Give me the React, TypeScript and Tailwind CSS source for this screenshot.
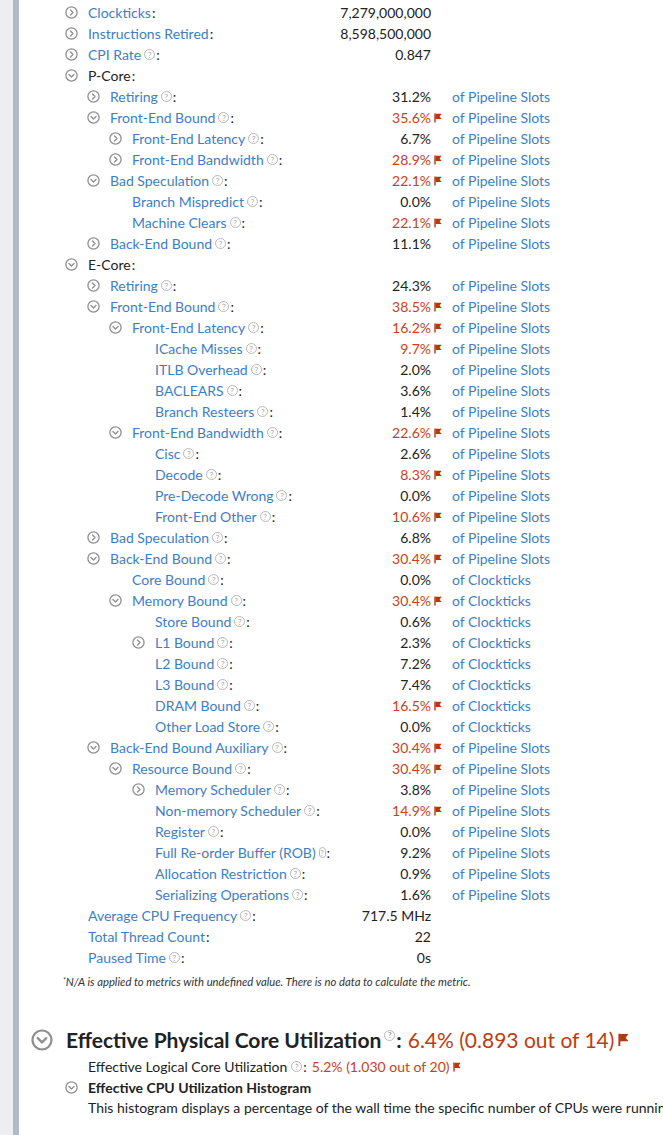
import React from "react";

type Icon = "open" | "closed" | "none";

type Metric = {
  level: number;
  icon: Icon;
  label: string;
  help?: boolean;
  plain?: boolean; // black label, no link
  value?: string;
  flag?: boolean;
  unit?: string;
};

const PS = "of Pipeline Slots";
const CT = "of Clockticks";

const rows: Metric[] = [
  { level: 0, icon: "closed", label: "Clockticks", value: "7,279,000,000" },
  { level: 0, icon: "closed", label: "Instructions Retired", value: "8,598,500,000" },
  { level: 0, icon: "closed", label: "CPI Rate", help: true, value: "0.847" },
  { level: 0, icon: "open", label: "P-Core", plain: true },
  { level: 1, icon: "closed", label: "Retiring", help: true, value: "31.2%", unit: PS },
  { level: 1, icon: "open", label: "Front-End Bound", help: true, value: "35.6%", flag: true, unit: PS },
  { level: 2, icon: "closed", label: "Front-End Latency", help: true, value: "6.7%", unit: PS },
  { level: 2, icon: "closed", label: "Front-End Bandwidth", help: true, value: "28.9%", flag: true, unit: PS },
  { level: 1, icon: "open", label: "Bad Speculation", help: true, value: "22.1%", flag: true, unit: PS },
  { level: 2, icon: "none", label: "Branch Mispredict", help: true, value: "0.0%", unit: PS },
  { level: 2, icon: "none", label: "Machine Clears", help: true, value: "22.1%", flag: true, unit: PS },
  { level: 1, icon: "closed", label: "Back-End Bound", help: true, value: "11.1%", unit: PS },
  { level: 0, icon: "open", label: "E-Core", plain: true },
  { level: 1, icon: "closed", label: "Retiring", help: true, value: "24.3%", unit: PS },
  { level: 1, icon: "open", label: "Front-End Bound", help: true, value: "38.5%", flag: true, unit: PS },
  { level: 2, icon: "open", label: "Front-End Latency", help: true, value: "16.2%", flag: true, unit: PS },
  { level: 3, icon: "none", label: "ICache Misses", help: true, value: "9.7%", flag: true, unit: PS },
  { level: 3, icon: "none", label: "ITLB Overhead", help: true, value: "2.0%", unit: PS },
  { level: 3, icon: "none", label: "BACLEARS", help: true, value: "3.6%", unit: PS },
  { level: 3, icon: "none", label: "Branch Resteers", help: true, value: "1.4%", unit: PS },
  { level: 2, icon: "open", label: "Front-End Bandwidth", help: true, value: "22.6%", flag: true, unit: PS },
  { level: 3, icon: "none", label: "Cisc", help: true, value: "2.6%", unit: PS },
  { level: 3, icon: "none", label: "Decode", help: true, value: "8.3%", flag: true, unit: PS },
  { level: 3, icon: "none", label: "Pre-Decode Wrong", help: true, value: "0.0%", unit: PS },
  { level: 3, icon: "none", label: "Front-End Other", help: true, value: "10.6%", flag: true, unit: PS },
  { level: 1, icon: "closed", label: "Bad Speculation", help: true, value: "6.8%", unit: PS },
  { level: 1, icon: "open", label: "Back-End Bound", help: true, value: "30.4%", flag: true, unit: PS },
  { level: 2, icon: "none", label: "Core Bound", help: true, value: "0.0%", unit: CT },
  { level: 2, icon: "open", label: "Memory Bound", help: true, value: "30.4%", flag: true, unit: CT },
  { level: 3, icon: "none", label: "Store Bound", help: true, value: "0.6%", unit: CT },
  { level: 3, icon: "closed", label: "L1 Bound", help: true, value: "2.3%", unit: CT },
  { level: 3, icon: "none", label: "L2 Bound", help: true, value: "7.2%", unit: CT },
  { level: 3, icon: "none", label: "L3 Bound", help: true, value: "7.4%", unit: CT },
  { level: 3, icon: "none", label: "DRAM Bound", help: true, value: "16.5%", flag: true, unit: CT },
  { level: 3, icon: "none", label: "Other Load Store", help: true, value: "0.0%", unit: CT },
  { level: 1, icon: "open", label: "Back-End Bound Auxiliary", help: true, value: "30.4%", flag: true, unit: PS },
  { level: 2, icon: "open", label: "Resource Bound", help: true, value: "30.4%", flag: true, unit: PS },
  { level: 3, icon: "closed", label: "Memory Scheduler", help: true, value: "3.8%", unit: PS },
  { level: 3, icon: "none", label: "Non-memory Scheduler", help: true, value: "14.9%", flag: true, unit: PS },
  { level: 3, icon: "none", label: "Register", help: true, value: "0.0%", unit: PS },
  { level: 3, icon: "none", label: "Full Re-order Buffer (ROB)", help: true, value: "9.2%", unit: PS },
  { level: 3, icon: "none", label: "Allocation Restriction", help: true, value: "0.9%", unit: PS },
  { level: 3, icon: "none", label: "Serializing Operations", help: true, value: "1.6%", unit: PS },
  { level: 0, icon: "none", label: "Average CPU Frequency", help: true, value: "717.5 MHz" },
  { level: 0, icon: "none", label: "Total Thread Count", value: "22" },
  { level: 0, icon: "none", label: "Paused Time", help: true, value: "0s" },
];

const indent = [0, 22, 44, 67];

function Toggle({ open, size = 13 }: { open: boolean; size?: number }) {
  return (
    <svg width={size} height={size} viewBox="0 0 13 13" className="shrink-0">
      <circle cx="6.5" cy="6.5" r="5.6" fill="none" stroke="#8f8f8f" strokeWidth="1.3" />
      {open ? (
        <path d="M4 5.4 L6.5 7.9 L9 5.4" fill="none" stroke="#8f8f8f" strokeWidth="1.4" strokeLinecap="round" strokeLinejoin="round" />
      ) : (
        <path d="M5.5 4 L8 6.5 L5.5 9" fill="none" stroke="#8f8f8f" strokeWidth="1.4" strokeLinecap="round" strokeLinejoin="round" />
      )}
    </svg>
  );
}

function Help({ className = "" }: { className?: string }) {
  return (
    <span
      className={`inline-flex h-[11px] w-[11px] items-center justify-center rounded-full border border-[#b8b8b8] text-[8px] leading-none text-[#a8a8a8] ${className}`}
    >
      ?
    </span>
  );
}

function Flag({ size = 8 }: { size?: number }) {
  return (
    <svg width={size} height={size * 1.25} viewBox="0 0 8 10" className="shrink-0">
      <path d="M1 0.5 V9.5" stroke="#b8360c" strokeWidth="1.4" />
      <path d="M1.5 0.8 H7.6 L5.6 3.4 L7.6 6 H1.5 Z" fill="#b8360c" />
    </svg>
  );
}

function Row({ m }: { m: Metric }) {
  return (
    <div className="grid h-[21px] grid-cols-[266px_114px_1fr] items-center whitespace-nowrap pl-[45px]">
      <div className="flex items-center" style={{ paddingLeft: indent[m.level] }}>
        <span className="flex w-[24px] shrink-0 items-center pl-[1px]">
          {m.icon !== "none" && <Toggle open={m.icon === "open"} />}
        </span>
        <span className={m.plain ? "text-[#222]" : "text-[#3d7ec6]"}>{m.label}</span>
        {m.help && <Help className="ml-[3px]" />}
        <span className="ml-[1px] text-[#222]">:</span>
      </div>
      <div className="flex items-center justify-end">
        {m.value && (
          <>
            <span className={m.flag ? "text-[#cc4118]" : "text-[#222]"}>{m.value}</span>
            {m.flag ? (
              <span className="ml-[3px] mr-[1px] flex w-[9px] items-center">
                <Flag />
              </span>
            ) : (
              <span className="w-[13px]" />
            )}
          </>
        )}
      </div>
      <div className="pl-[8px] text-[#3d7ec6]">{m.unit}</div>
    </div>
  );
}

export default function App() {
  return (
    <div className="flex min-h-screen bg-white font-['Lato','Liberation_Sans',sans-serif] text-[14px] text-[#222]">
      <div className="w-[13px] shrink-0 bg-[#eceef2]" />
      <div className="w-[6px] shrink-0 bg-[#b1bac3]" />
      <div className="min-w-0 flex-1 overflow-hidden pt-[2px]">
        {rows.map((m, i) => (
          <Row key={i} m={m} />
        ))}

        <p className="mt-[7px] whitespace-nowrap pl-[44px] text-[11.3px] italic leading-[14px] text-[#333]">
          <sup className="text-[7px]">*</sup>N/A is applied to metrics with undefined value. There is no data to calculate the metric.
        </p>

        <div className="mt-[37px] flex items-center whitespace-nowrap pl-[12px]">
          <Toggle open size={22} />
          <h2 className="ml-[13px] flex items-center text-[21px] font-bold leading-[28px] text-[#222]">
            Effective Physical Core Utilization
            <Help className="ml-[3px] -mt-[10px]" />
            <span className="ml-[1px]">:</span>
            <span className="ml-[6px] font-normal text-[#c23a0e]">6.4% (0.893 out of 14)</span>
            <span className="ml-[4px]">
              <Flag size={11} />
            </span>
          </h2>
        </div>

        <div className="mt-[2px] flex h-[21px] items-center whitespace-nowrap pl-[69px]">
          <span>Effective Logical Core Utilization</span>
          <Help className="ml-[4px]" />
          <span className="ml-[1px]">:</span>
          <span className="ml-[5px] text-[#cc4118]">5.2% (1.030 out of 20)</span>
          <span className="ml-[3px]">
            <Flag />
          </span>
        </div>

        <div className="flex h-[21px] items-center whitespace-nowrap pl-[46px]">
          <span className="w-[23px]">
            <Toggle open />
          </span>
          <span className="font-bold">Effective CPU Utilization Histogram</span>
        </div>
        <div className="h-[20px] whitespace-nowrap pl-[69px] leading-[20px]">
          This histogram displays a percentage of the wall time the specific number of CPUs were running simultaneously.
        </div>
      </div>
    </div>
  );
}
